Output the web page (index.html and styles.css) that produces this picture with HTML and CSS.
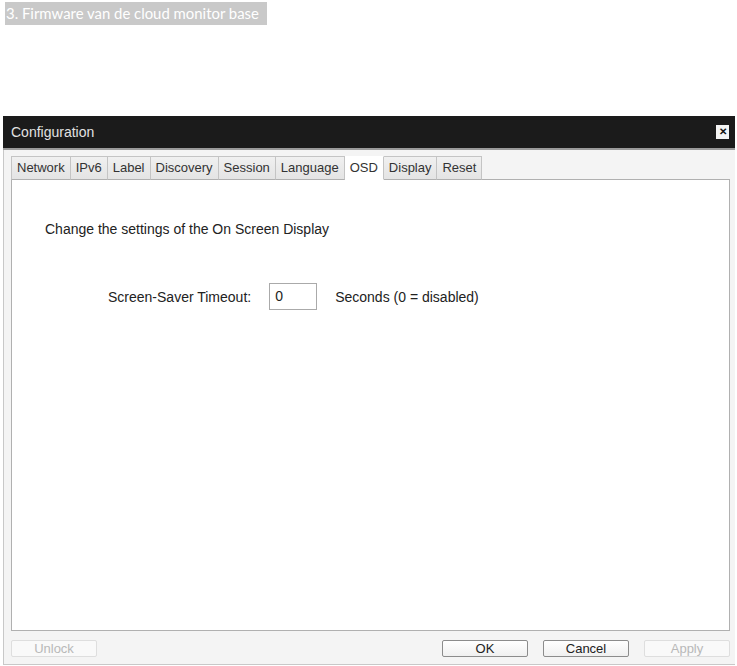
FILE: index.html
```html
<!DOCTYPE html>
<html>
<head>
<meta charset="utf-8">
<link rel="stylesheet" href="styles.css">
</head>
<body>
<div class="caption">3. Firmware van de cloud monitor base</div>
<div class="dialog">
  <div class="titlebar">
    <span class="title">Configuration</span>
    <span class="close">✕</span>
  </div>
  <div class="body">
    <div class="tabs">
      <div class="tab">Network</div>
      <div class="tab">IPv6</div>
      <div class="tab">Label</div>
      <div class="tab">Discovery</div>
      <div class="tab">Session</div>
      <div class="tab">Language</div>
      <div class="tab active">OSD</div>
      <div class="tab">Display</div>
      <div class="tab">Reset</div>
    </div>
    <div class="panel">
      <p class="intro">Change the settings of the On Screen Display</p>
      <div class="row">
        <span class="label">Screen-Saver Timeout:</span>
        <span class="input">0</span>
        <span class="hint">Seconds (0 = disabled)</span>
      </div>
    </div>
    <div class="buttons">
      <button class="btn disabled">Unlock</button>
      <div class="spacer"></div>
      <button class="btn">OK</button>
      <button class="btn">Cancel</button>
      <button class="btn disabled">Apply</button>
    </div>
  </div>
</div>
</body>
</html>
```
FILE: styles.css
```css
html, body {
  margin: 0;
  padding: 0;
  background: #ffffff;
}
body {
  width: 737px;
  height: 666px;
  overflow: hidden;
  font-family: "Liberation Sans", Arial, sans-serif;
  font-size: 12px;
  color: #222;
}
.caption {
  display: inline-block;
  margin: 2px 0 0 5px;
  height: 23px;
  line-height: 23px;
  padding: 0 8px 0 1px;
  background: #c9c9c9;
  color: #ffffff;
  font-family: Lato, "Open Sans", sans-serif;
  font-size: 14.9px;
}
.dialog {
  margin: 91px 0 0 3px;
  width: 732px;
  height: 549px;
  box-sizing: border-box;
  border-left: 1px solid #c8c8c8;
  border-bottom: 1px solid #c8c8c8;
  display: flex;
  flex-direction: column;
  background: #f4f4f4;
}
.titlebar {
  height: 32px;
  background: #1b1b1b;
  border-bottom: 2px solid #9a9a9a;
  display: flex;
  align-items: center;
  justify-content: space-between;
  padding: 0 6px 0 8px;
  margin-left: -1px;
}
.title {
  color: #e2e2e2;
  font-size: 14px;
}
.close {
  width: 13px;
  height: 14px;
  background: #f4f4f4;
  color: #111;
  font-size: 10px;
  font-weight: bold;
  line-height: 14px;
  text-align: center;
}
.body {
  flex: 1;
  display: flex;
  flex-direction: column;
  padding: 6px 5px 7px 7px;
}
.tabs {
  display: flex;
  height: 24px;
  position: relative;
  z-index: 1;
}
.tab {
  border: 1px solid #c4c4c4;
  border-left: none;
  border-bottom: 1px solid #b0b0b0;
  background: linear-gradient(#f0f0f0, #e4e4e4);
  padding: 0 5px;
  line-height: 22px;
  font-size: 13px;
  color: #333;
}
.tab:first-child {
  border-left: 1px solid #c4c4c4;
}
.tab.active {
  background: #ffffff;
  border-top-color: #ffffff;
  border-bottom-color: #ffffff;
}
.panel {
  flex: 1;
  margin-top: -1px;
  background: #ffffff;
  border: 1px solid #b0b0b0;
  padding: 0;
}
.intro {
  margin: 41px 0 0 33px;
  font-size: 14px;
}
.row {
  display: flex;
  align-items: center;
  margin: 46px 0 0 96px;
  font-size: 14px;
}
.label {
  margin-right: 18px;
}
.input {
  width: 41px;
  height: 25px;
  border: 1px solid #aaaaaa;
  line-height: 25px;
  padding-left: 5px;
  margin-right: 18px;
}
.buttons {
  display: flex;
  margin-top: 9px;
  height: 17px;
}
.spacer {
  flex: 1;
}
.btn {
  width: 86px;
  height: 17px;
  padding: 0;
  margin-left: 15px;
  background: linear-gradient(#ffffff, #f0f0f0);
  border: 1px solid #8c8c8c;
  border-radius: 2px;
  font-family: "Liberation Sans", Arial, sans-serif;
  font-size: 13px;
  line-height: 15px;
  color: #222;
}
.btn:first-child {
  margin-left: 0;
}
.btn.disabled {
  border-color: #dedede;
  color: #b8b8b8;
  background: #f9f9f9;
}
```
